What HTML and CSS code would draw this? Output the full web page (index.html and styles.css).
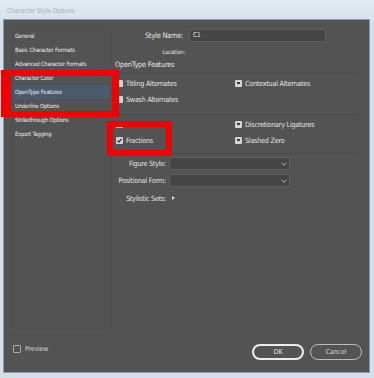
FILE: index.html
```html
<!DOCTYPE html>
<html lang="en">
<head>
  <meta charset="UTF-8">
  <meta name="viewport" content="width=device-width, initial-scale=1.0">
  <title>Character Style Options</title>
  <link rel="stylesheet" href="styles.css">
</head>
<body>
  <div class="window">
    <div class="titlebar">Character Style Options</div>
    <div class="frame">
      <div class="dialog">
        <div class="content">
          <ul class="sidebar">
            <li>General</li>
            <li>Basic Character Formats</li>
            <li>Advanced Character Formats</li>
            <li>Character Color</li>
            <li class="active">OpenType Features</li>
            <li>Underline Options</li>
            <li>Strikethrough Options</li>
            <li>Export Tagging</li>
          </ul>
          <div class="main">
            <div class="name-row">
              <span class="name-label">Style Name:</span>
              <div class="text-input">C1</div>
            </div>
            <div class="location">Location:</div>
            <div class="section-title">OpenType Features</div>
            <div class="opt-group group-a">
              <div class="opt"><span class="cb light"></span>Titling Alternates</div>
              <div class="opt"><span class="cb mixed"></span>Contextual Alternates</div>
              <div class="opt"><span class="cb light"></span>Swash Alternates</div>
              <div class="opt"></div>
            </div>
            <div class="opt-group group-b">
              <div class="opt"><span class="cb light"></span>Ordinals</div>
              <div class="opt"><span class="cb mixed"></span>Discretionary Ligatures</div>
              <div class="opt"><span class="cb checked"><svg width="7" height="7" viewBox="0 0 7 7"><polyline points="1.5,3.6 3,5 5.6,1.8" fill="none" stroke="#3c3c3c" stroke-width="1.3"/></svg></span>Fractions</div>
              <div class="opt"><span class="cb mixed"></span>Slashed Zero</div>
            </div>
            <div class="select-group">
              <div class="field-row">
                <span class="field-label">Figure Style:</span>
                <div class="select"><svg width="6" height="4" viewBox="0 0 6 4"><polyline points="0.5,0.8 3,3.2 5.5,0.8" fill="none" stroke="#b8b8b8" stroke-width="1"/></svg></div>
              </div>
              <div class="field-row">
                <span class="field-label">Positional Form:</span>
                <div class="select"><svg width="6" height="4" viewBox="0 0 6 4"><polyline points="0.5,0.8 3,3.2 5.5,0.8" fill="none" stroke="#b8b8b8" stroke-width="1"/></svg></div>
              </div>
              <div class="field-row sets-row">
                <span class="field-label">Stylistic Sets:</span>
                <span class="expander"></span>
              </div>
            </div>
          </div>
        </div>
        <div class="footer">
          <div class="preview"><span class="cb empty"></span>Preview</div>
          <div class="buttons">
            <button class="btn primary">OK</button>
            <button class="btn">Cancel</button>
          </div>
        </div>
      </div>
    </div>
    <!-- red annotation boxes drawn over the screenshot -->
    <div class="mark mark-sidebar"></div>
    <div class="mark mark-fractions"></div>
  </div>
</body>
</html>
```

FILE: styles.css
```css
body {
  margin: 0;
  font-family: "DejaVu Sans Condensed", "Liberation Sans", sans-serif;
  background-color: #d4dfeb;
}
.window {
  position: relative;
  width: 374px;
  height: 378px;
  display: flex;
  flex-direction: column;
  background-color: #d4dfeb;
  overflow: hidden;
}
.titlebar {
  height: 20px;
  line-height: 23px;
  padding-left: 7px;
  font-size: 6.8px;
  letter-spacing: -0.25px;
  color: #a9b3bf;
  background: linear-gradient(#e3eaf3, #d7e2ee);
}
.frame {
  flex: 1;
  display: flex;
  padding: 0 5px 6px 4px;
}
.dialog {
  flex: 1;
  display: flex;
  flex-direction: column;
  background-color: #535353;
  box-shadow: 0 0 0 1px #8e99a6;
  color: #e4e4e4;
}
.content {
  flex: 1;
  display: flex;
  padding: 8px 0 0 8px;
}
.sidebar {
  list-style: none;
  margin: 0;
  padding: 0;
  width: 97px;
  height: 306px;
  border: 1px solid #4d4d4d;
  font-size: 5.8px;
  letter-spacing: -0.18px;
  color: #efefef;
}
.sidebar li {
  height: 14px;
  line-height: 14px;
  padding-left: 2px;
}
.sidebar li.active {
  background-color: #4b5a6d;
}
.main {
  flex: 1;
  padding: 1px 10px 0 4px;
  font-size: 7.2px;
  letter-spacing: -0.25px;
}
.name-row {
  display: flex;
  align-items: center;
  gap: 6px;
  height: 13px;
}
.name-label {
  width: 68px;
  text-align: right;
  font-size: 7.4px;
}
.text-input {
  width: 132px;
  height: 11px;
  line-height: 11px;
  padding-left: 3px;
  background-color: #454545;
  border: 1px solid #5f5f5f;
  border-radius: 1px;
  font-size: 6.6px;
}
.location {
  width: 70px;
  text-align: right;
  font-size: 5.8px;
  letter-spacing: -0.15px;
  margin-top: 7px;
  height: 9px;
}
.section-title {
  margin-top: 0;
  height: 14px;
  line-height: 14px;
  font-size: 7.4px;
}
.opt-group {
  display: grid;
  grid-template-columns: 119px 1fr;
  border-top: 1px solid #494949;
  padding-top: 1px;
  margin-top: 1px;
}
.group-a {
  padding-bottom: 6px;
}
.group-b {
  padding-bottom: 5px;
}
.opt {
  height: 16px;
  display: flex;
  align-items: center;
  gap: 3px;
  padding-left: 1px;
}
.cb {
  position: relative;
  width: 7px;
  height: 7px;
  border-radius: 1px;
  flex-shrink: 0;
  display: flex;
  align-items: center;
  justify-content: center;
}
.cb.light,
.cb.mixed,
.cb.checked {
  background-color: #d4d4d4;
}
.cb.mixed::after {
  content: "";
  width: 3px;
  height: 1.3px;
  background-color: #3c3c3c;
}
.cb.empty {
  width: 6px;
  height: 6px;
  border: 1px solid #a9a9a9;
}
.select-group {
  border-top: 1px solid #494949;
  padding-top: 3px;
}
.field-row {
  display: flex;
  align-items: center;
  gap: 3px;
  margin-bottom: 4px;
}
.field-label {
  width: 51px;
  text-align: right;
  white-space: nowrap;
}
.select {
  width: 117px;
  height: 11px;
  background-color: #454545;
  border: 1px solid #5f5f5f;
  border-radius: 1px;
  display: flex;
  align-items: center;
  justify-content: flex-end;
  padding-right: 2px;
}
.sets-row {
  height: 14px;
  gap: 6px;
}
.expander {
  width: 0;
  height: 0;
  border-top: 2.5px solid transparent;
  border-bottom: 2.5px solid transparent;
  border-left: 3.5px solid #d8d8d8;
}
.footer {
  display: flex;
  justify-content: space-between;
  align-items: center;
  padding: 0 7px 12px 9px;
}
.preview {
  display: flex;
  align-items: center;
  gap: 4px;
  font-size: 6.8px;
  letter-spacing: -0.1px;
  color: #d8d8d8;
  margin-top: -6px;
}
.buttons {
  display: flex;
  gap: 6px;
}
.btn {
  width: 52px;
  height: 16px;
  border-radius: 8px;
  background: transparent;
  border: 1.5px solid #bdbdbd;
  color: #dcdcdc;
  font-family: inherit;
  font-size: 6.8px;
  padding: 0;
}
.btn.primary {
  border: 2px solid #ececec;
  color: #f2f2f2;
}
.mark {
  position: absolute;
  border: 6px solid #f40000;
}
.mark-sidebar {
  left: 1px;
  top: 70px;
  width: 101px;
  height: 35px;
  border-left-width: 10px;
  border-right-width: 7px;
}
.mark-fractions {
  left: 107px;
  top: 121px;
  width: 53px;
  height: 23px;
}
```
